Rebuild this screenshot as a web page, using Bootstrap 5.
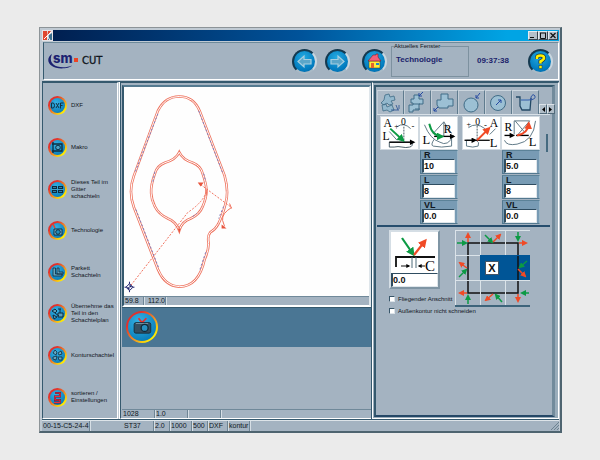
<!DOCTYPE html>
<html lang="de">
<head>
<meta charset="utf-8">
<meta name="viewport" content="width=device-width, initial-scale=1">
<title>CUT – Technologie</title>
<link href="https://cdn.jsdelivr.net/npm/bootstrap@5.3.0/dist/css/bootstrap.min.css" rel="stylesheet">
<style>
:root{--face:#a4b3c1;--edge:#35596e;--mid:#7897a9;--steel:#4a7694;--navy:#1b1f6b}
body{background:#ebebeb;font-family:"Liberation Sans",Arial,sans-serif;font-size:6px;line-height:7px;color:#10151c;min-height:100vh;padding:27px 38px 27px 39px}
button{font:inherit;color:inherit;border:0;padding:0;background:none}
svg{display:block;flex:none}
.app-window{background:#c0cad3;border:1px solid #8d9498;border-right:2px solid #4e6470;border-bottom:2px solid #4e6470;padding:2px 1px 0 2px}
.title-strip{height:11px;background:linear-gradient(90deg,#001d4d,#00539a 50%,#00a4e4 90%);padding-right:1px}
.win-btn{width:10px;height:9px;background:#b4bfc9;border:1px solid #e6ebef;border-right-color:#39434e;border-bottom-color:#39434e}
.win-btn svg,.spin svg{margin:auto}
.panel{background:var(--face);border:1px solid var(--edge);border-right-color:#fff;border-bottom-color:#fff}
.head-panel{height:38px;margin:1px 0 1px 1px;padding:0 5px 0 4px;border-top-color:#6d8a9a}
.brand{font:500 10px/12px "DejaVu Sans",sans-serif;-webkit-text-stroke:.3px #10151c}
.round-btn{width:25px;height:25px;border-radius:50%;border:2px solid #14394f;border-right-color:#c9d6df;border-bottom-color:#a9bac6;background:radial-gradient(circle at 45% 30%,#23a9e0,#0079bd 70%,#00548f)}
.window-box{width:78px;height:31px;border:1px solid #7d919f;position:relative}
.window-box legend{float:none;width:auto;position:absolute;left:2px;top:-4px;font-size:6px;line-height:7px;margin:0;background:var(--face)}
.heading{font-weight:700;font-size:8px;line-height:10px;color:var(--navy)}
.clock{margin-right:19px}
.body-grid{display:grid;grid-template-columns:minmax(0,76fr) minmax(0,253fr) minmax(0,188fr);border-top:1px solid var(--edge)}
.side-nav{padding-top:2px}
.side-btn{flex:1 1 0;min-height:0;gap:4px;padding-left:5px;white-space:nowrap;overflow:hidden}
.ring{width:19px;height:19px;border-radius:50%;flex:none;background:linear-gradient(135deg,#e2302c 25%,#f08a24 55%,#fff200 85%);padding:2px}
.ring-face{width:100%;height:100%;border-radius:50%;background:radial-gradient(circle at 40% 30%,#35b1e4,#0b7fba 75%)}
.ring-lg{width:32px;height:32px}
.center-col{border:1px solid var(--edge);border-right:0;border-bottom-color:#fff;margin-left:2px;padding-left:1px;background:var(--face);box-shadow:-1px 0 #fff}
.view-frame{border:2px solid var(--edge);border-top-color:#557b91;border-right-color:#dfe6eb;border-bottom-color:#fff;background:#fefefe;margin:2px 0 0 0}
.strip{height:9px;background:#a4b3c1;border-top:1px solid #70899a;font-size:7px;line-height:8px}
.strip-cell{border-right:1px solid #6e8595;box-shadow:1px 0 #d6dee5;padding-left:1px;white-space:nowrap;height:8px;flex:none;color:#10171e}
.c16{width:16px}.c20{width:20px}.c22{width:22px}.c31{width:31px}.c33{width:33px}
.steel-band{background:var(--steel);height:40px;padding:3px 4px;border-top:1px solid var(--edge)}
.right-col{border:1px solid #fff;border-top-color:var(--edge);background:#9aadbb;padding:2px 3px 1px 1px;margin-left:1px;border-left:1px solid #fff;box-shadow:-1px 0 var(--edge)}
.right-inner{background:var(--face);border:2px solid var(--edge);border-right:3px solid #728b9c;border-bottom:2px solid #254867;padding:3px 2px 0 1px}
.tab-btn{flex:0 1 27px;height:24px;border-top:1px solid #ccd6de;border-left:1px solid #c3ced7;border-right:1px solid #5f7b8e}
.tab-btn.active{background:#acbac7}
.spin{width:8px;height:10px;flex:none;background:#b0bdc8;border:1px solid #dce3e9;border-right-color:#526b7b;border-bottom-color:#526b7b}
.pane{border-top:1px solid #d8e0e7;border-bottom:2px solid #264d6d;padding:1px 2px 0 3px}
.pane-scroll{border-right:2px solid #456a80;height:18px;align-self:flex-start;margin-top:18px}
.pair{width:78px}
.pic{background:#fff;border:1px solid #d1dae1;width:39px;height:34px}
.params{width:38px}
.param{background:#789bb4;height:24px;border:1px solid #53788f;border-top-color:#5b8298;border-right-color:#9bb5c6;padding:0 0 0 1px;margin-bottom:1px}
.param label{display:block;font-weight:700;font-size:9px;line-height:8px;height:8px;padding-left:2px;color:#12181d}
.num-in{display:block;width:33px;height:14px;border:1px solid #2f4d61;border-right-color:#dfe6eb;border-bottom-color:#dfe6eb;border-left-width:2px;border-radius:0;background:#fff;padding:0;font-weight:700;font-size:9px;line-height:11px;color:#111}
.lower{padding:3px 0 0 12px}
.opts{width:66px;white-space:nowrap}
.gap-box{width:51px;border:2px solid #d5dee5;border-right-color:#7f95a4;border-bottom-color:#7f95a4;background:#fff;margin-bottom:4px}
.gap-box .num-in{width:100%}
.tick-row{gap:3px;height:12px}
.tick{appearance:none;width:6px;height:6px;background:#fff;border:1px solid #38566a;border-right-color:#dce3e9;border-bottom-color:#dce3e9;margin:0;flex:none}
.tick:checked{background:#00539a}
.dir-grid{display:grid;grid-template-columns:repeat(3,25px);border-bottom:2px solid #3d647b;align-self:flex-start}
.dir-btn{height:25px;border-top:1px solid #dbe3e9;border-left:1px solid #dbe3e9}
.dir-btn.on{background:#005596;border-color:#005596}
.x-face{width:14px;height:14px;background:#fff;border:1px solid #456;font-size:11px;line-height:12px;font-weight:700;color:#111;margin-left:4px}
.foot{height:12px;font-size:7px;line-height:10px;background:var(--face);border-top:1px solid var(--edge);box-shadow:inset 0 1px #dde4e9;padding-top:1px}
.foot .strip-cell{height:10px}
.lead-cell{flex:0 0 81px}
</style>
<script src="https://cdn.jsdelivr.net/npm/bootstrap@5.3.0/dist/js/bootstrap.bundle.min.js"></script>
</head>
<body class="d-flex flex-column">
<svg width="0" height="0" class="position-absolute" aria-hidden="true">
<defs>
<marker id="ar" viewBox="0 0 6 6" refX="4" refY="3" markerWidth="4" markerHeight="4" orient="auto"><path d="M0 0L6 3L0 6z" fill="#f04a26"/></marker>
<marker id="ag" viewBox="0 0 6 6" refX="4" refY="3" markerWidth="4" markerHeight="4" orient="auto"><path d="M0 0L6 3L0 6z" fill="#0c9a44"/></marker>
<marker id="ak" viewBox="0 0 6 6" refX="4" refY="3" markerWidth="5" markerHeight="4" orient="auto"><path d="M0 0L6 3L0 6z" fill="#000"/></marker>
</defs></svg>
<main class="app-window d-flex flex-column flex-grow-1">
 <div class="title-strip d-flex align-items-center flex-shrink-0">
  <svg width="11" height="11" viewBox="0 0 11 11"><path fill="#e8e4e6" d="M0 0h11v11H0z"/><path fill="#e04830" d="M1 1h4v9H1zM6 1h3L5 7z"/><path fill="#3a6f8e" d="M7 5l3-2v7H6z"/><path stroke="#fff" d="M2 9L9 2M5 6l3 4" fill="none"/></svg>
  <button class="win-btn d-flex ms-auto" aria-label="Minimieren"><svg width="8" height="7"><path d="M1 5.500h4" stroke="#111"/></svg></button>
  <button class="win-btn d-flex" aria-label="Maximieren"><svg width="8" height="7"><path d="M1 1h6M1.500 1v5.500h5V1" stroke="#111" fill="none"/></svg></button>
  <button class="win-btn d-flex" aria-label="Schließen"><svg width="8" height="7"><path d="M1.500 1l5 5M6.500 1l-5 5" stroke="#111" stroke-width="1.200"/></svg></button>
 </div>
 <header class="panel head-panel d-flex align-items-center flex-shrink-0">
  <svg width="34" height="20" viewBox="0 0 34 20" role="img" aria-label="sm"><path d="M4 3C-1 6 -1 12 4 15C8 18.500 21 18 24 14.500C19 17 9 17 5.500 13.500C2.500 11 2 7 4 3z" fill="#1c2272"/><text x="5" y="12" font-family="Inter,sans-serif" font-weight="800" font-size="13" fill="#1c2272">sm</text><rect x="26" y="7" width="4" height="4" fill="#ee4323"/></svg>
  <span class="brand">CUT</span>
  <div class="d-flex ms-auto align-items-center">
   <div class="d-flex gap-2 me-2 pe-1">
   <button class="round-btn" aria-label="Zurück"><svg width="21" height="21" viewBox="0 0 21 21"><path d="M4 10.500L10 5v3.500h7v4.500h-7V16z" fill="#5aa6c9" stroke="#a7cfe0" stroke-width="1.200"/></svg></button>
   <button class="round-btn" aria-label="Vor"><svg width="21" height="21" viewBox="0 0 21 21"><path d="M17 10.500L11 5v3.500H4v4.500h7V16z" fill="#5aa6c9" stroke="#a7cfe0" stroke-width="1.200"/></svg></button>
   </div>
   <button class="round-btn me-1" aria-label="Start"><svg width="21" height="21" viewBox="0 0 21 21"><path d="M5 10h11v7H5z" fill="#ffee3b" stroke="#333" stroke-width=".5"/><path d="M9 4L4 10h13l-3-4V3h-2v1z" fill="#f0607a" stroke="#711" stroke-width=".5"/><path d="M7 12h3v5H7z" fill="#e7662b"/><path d="M12 12h3v2h-3z" fill="#2386c8"/></svg></button>
   <fieldset class="window-box me-2"><legend>Aktuelles Fenster</legend><div class="heading ps-1 pt-2">Technologie</div></fieldset>
   <time class="heading clock">09:37:38</time>
   <button class="round-btn" aria-label="Hilfe"><svg width="21" height="21" viewBox="0 0 21 21"><path d="M7 8V6.500Q7 4.500 10.500 4.500Q14 4.500 14 7Q14 8.500 10.500 10.500V12.500" fill="none" stroke="#18364b" stroke-width="4"/><path d="M7 8V6.500Q7 4.500 10.500 4.500Q14 4.500 14 7Q14 8.500 10.500 10.500V12.500" fill="none" stroke="#fff100" stroke-width="2.600"/><rect x="9" y="14.500" width="3" height="3" fill="#fff100" stroke="#18364b" stroke-width=".5"/></svg></button>
  </div>
 </header>
 <div class="body-grid flex-grow-1">
  <nav class="panel side-nav d-flex flex-column">
   <button class="side-btn d-flex align-items-center text-start"><span class="ring"><span class="ring-face d-block"><svg width="15" height="15" viewBox="0 0 15 15"><path d="M1.500 5h1.500q1.500 0 1.500 2.500T3 10H1.500zM6 5l3 5M9 5l-3 5M10.500 10.500V5h3M10.500 7.500h2" fill="none" stroke="#123246"/></svg></span></span><span>DXF</span></button>
   <button class="side-btn d-flex align-items-center text-start"><span class="ring"><span class="ring-face d-block"><svg width="15" height="15" viewBox="0 0 15 15"><path d="M3 2v11M2 4h10v7H2" fill="none" stroke="#0d2c40" stroke-width="1.300"/><circle cx="8" cy="7.500" r="2.300" fill="#4da3c5" stroke="#0d2c40"/></svg></span></span><span>Makro</span></button>
   <button class="side-btn d-flex align-items-center text-start"><span class="ring"><span class="ring-face d-block"><svg width="15" height="15" viewBox="0 0 15 15"><path d="M2 4h5v3H2zM8 4h5v3H8zM2 8h5v3H2zM8 8h5v3H8z" fill="#0d2c40"/><path d="M1 7.500h13M3 5.500h3M9 5.500h3M3 9.500h3M9 9.500h3" stroke="#4da3c5" stroke-width=".7"/></svg></span></span><span>Dieses Teil im<br>Gitter<br>schachteln</span></button>
   <button class="side-btn d-flex align-items-center text-start"><span class="ring"><span class="ring-face d-block"><svg width="15" height="15" viewBox="0 0 15 15"><path d="M4 6h8v6H4z" fill="#7bb6cf" stroke="#0d2c40"/><circle cx="8" cy="9" r="2.300" fill="#238fbd" stroke="#0d2c40"/><path d="M3 1l2 4" stroke="#e9422d" stroke-width="1.500"/></svg></span></span><span>Technologie</span></button>
   <button class="side-btn d-flex align-items-center text-start"><span class="ring"><span class="ring-face d-block"><svg width="15" height="15" viewBox="0 0 15 15"><path d="M3 3h2.500v6H12v2H3zM7 3h2v4h4v2H7z" fill="#63a5bf" stroke="#0d2c40" stroke-width=".8"/></svg></span></span><span>Parkett<br>Schachteln</span></button>
   <button class="side-btn d-flex align-items-center text-start"><span class="ring"><span class="ring-face d-block"><svg width="15" height="15" viewBox="0 0 15 15"><path d="M2 5l3-2 2 2-2 2zM3 9l4 2-3 2zM8 7h5v4H8zM8 3h3M10 3v4M5 7l4 3" fill="#5b9fb9" stroke="#0d2c40"/></svg></span></span><span>Übernehme das<br>Teil in den<br>Schachtelplan</span></button>
   <button class="side-btn d-flex align-items-center text-start"><span class="ring"><span class="ring-face d-block"><svg width="15" height="15" viewBox="0 0 15 15"><path d="M3 5l2-3 2 2-1 3zM8 5l3-2 1 3-3 1zM3 9l4-1-1 4-3-1zM8 9h4v3H9z" fill="#68a9c1" stroke="#0d2c40" stroke-width=".8"/></svg></span></span><span>Konturschachtel</span></button>
   <button class="side-btn d-flex align-items-center text-start"><span class="ring"><span class="ring-face d-block"><svg width="15" height="15" viewBox="0 0 15 15"><path d="M5 3h5v3.500H5V10h5v2.500H4" fill="none" stroke="#4c1d3e" stroke-width="2"/><path d="M5 3h5v3.500H5V10h5v2.500H4" fill="none" stroke="#f02d3c" stroke-width="1.200"/></svg></span></span><span>sortieren /<br>Einstellungen</span></button>
  </nav>
  <section class="center-col d-flex flex-column">
   <div class="view-frame d-flex flex-column">
    <svg width="100%" height="209" viewBox="123 87 246 209" preserveAspectRatio="xMinYMin meet" role="img" aria-label="Kontur">
     <g fill="none" stroke="#ee7460" stroke-width="2.600"><path d="M157 111Q164 96.500 178.500 96.500Q193 96.500 199 111L224 176Q228.500 192 225 204Q222 216 218 224Q215 230 209.500 233Q206.500 237 208 244Q208 251 204 260Q198 287.500 178.500 287.500Q164 287 157 270L133 208Q127 192 133 176Z"/><path d="M178.500 152.500Q175 160 164 163Q156 166 154 174C148 190 150 199 154 207Q158 215 167 219Q175 222 178.500 231Q181 222 190 219Q199 215 202 207C208 193 206 186 202 174Q200 166 192 163Q182 160 178.500 152.500Z"/></g>
     <g fill="none" stroke="#fff" stroke-width="1"><path d="M157 111Q164 96.500 178.500 96.500Q193 96.500 199 111L224 176Q228.500 192 225 204Q222 216 218 224Q215 230 209.500 233Q206.500 237 208 244Q208 251 204 260Q198 287.500 178.500 287.500Q164 287 157 270L133 208Q127 192 133 176Z"/><path d="M178.500 152.500Q175 160 164 163Q156 166 154 174C148 190 150 199 154 207Q158 215 167 219Q175 222 178.500 231Q181 222 190 219Q199 215 202 207C208 193 206 186 202 174Q200 166 192 163Q182 160 178.500 152.500Z"/></g>
     <g fill="none" stroke="#7d7dbd" stroke-dasharray="2 2"><path d="M157 114L134 173M198 111L222 173M135 210L158 269M205 253L199 271M223 207L218 219M152 182L154 172M203 174L205 182M192 217L196 214"/></g>
     <g fill="none" stroke="#f0705c"><path d="M130 286L187 213Q202 203 206 192M200 185L231 208" stroke-dasharray="2 1.500"/><path d="M231 208Q221 214 222 221L224 227M229 204L231 209M206 190v6"/></g>
     <path d="M197 183l6 0-3 4zM221 225l5 4-5 0zM177 229h3l-1.500 4z" fill="#e8543c"/>
     <g><path d="M123.500 288h10M128.500 282.500v10.500" stroke="#20246e"/><path d="M128.500 284.500l3.500 3.500-3.500 3.500-3.500-3.500z" fill="#fff" stroke="#20246e"/><path d="M128.500 285v3h3zM125.500 288h3v3z" fill="#20246e"/></g>
    </svg>
    <div class="strip d-flex"><span class="strip-cell c20">59.8</span><span class="strip-cell c22 ps-1">112.0</span></div>
   </div>
   <div class="steel-band"><button class="ring ring-lg" aria-label="Kamera"><span class="ring-face d-block"><svg width="28" height="28" viewBox="0 0 32 32"><path d="M12 6l4 5 5-5" fill="none" stroke="#e6302e" stroke-width="2"/><rect x="7" y="11" width="19" height="12" rx="2" fill="#344f61" stroke="#142a38"/><path d="M9 12h14" stroke="#7b98a8"/><circle cx="19" cy="17" r="4" fill="#298fc0" stroke="#102836" stroke-width="1.500"/></svg></span></button></div>
   <div class="strip d-flex mt-auto"><span class="strip-cell c33">1028</span><span class="strip-cell c33">1.0</span><span class="strip-cell c33"></span><span class="strip-cell c33 border-0 shadow-none"></span></div>
  </section>
  <section class="right-col d-flex flex-column">
   <div class="right-inner flex-grow-1">
    <div class="d-flex align-items-end" role="tablist">
     <button class="tab-btn active" role="tab" aria-label="Kontur"><svg width="25" height="22" viewBox="0 0 25 22" fill="#93b8cd" stroke="#406c87" stroke-width=".8"><path d="M7 3l4-1 1 3 4-1 1 4-4 1 2 3-4 1-2-2-3 2-3-2 3-3zM4 13l4-1 1 3 5-2 2 5-4 2-3-2-4 1z"/><path d="M13 18h8M18 13l2 5M21 13v4" stroke="#244b8d" fill="none"/></svg></button>
     <button class="tab-btn" role="tab" aria-label="Anfahren"><svg width="25" height="22" viewBox="0 0 25 22"><path d="M6 7h3V3h5v4h4v5h-4v6H8v2H4v-7h4v-2H6z" fill="#9cc0d4" stroke="#406c87"/><path d="M8 12h7M10 17h5" stroke="#406c87"/><path d="M18 0l-4 4M14 4h3M14 4V1" stroke="#2448a0" fill="none"/></svg></button>
     <button class="tab-btn" role="tab" aria-label="Außenecke"><svg width="25" height="22" viewBox="0 0 25 22"><path d="M9 2h7v5h5v7h-5v2H7l-2-3V8h4z" fill="#9cc0d4" stroke="#406c87"/><path d="M6 15l-4 4M2 19v-3M2 19h3" stroke="#2448a0"/></svg></button>
     <button class="tab-btn" role="tab" aria-label="Kreis außen"><svg width="25" height="22" viewBox="0 0 25 22"><circle cx="12" cy="13" r="7" fill="#9cc0d4" stroke="#406c87"/><path d="M21 1l-4 5M17 6h3M17 6V3" stroke="#2448a0" fill="none"/></svg></button>
     <button class="tab-btn" role="tab" aria-label="Kreis innen"><svg width="25" height="22" viewBox="0 0 25 22"><circle cx="12" cy="11" r="7.500" fill="#9cc0d4" stroke="#406c87"/><path d="M10 13l5-5M15 8h-3M15 8v3" stroke="#2448a0" fill="none"/></svg></button>
     <button class="tab-btn" role="tab" aria-label="Schlaufe"><svg width="25" height="22" viewBox="0 0 25 22"><path d="M7 7h10v11H9q-2-2-2-4z" fill="#9cc0d4"/><path d="M3 5h4v9l2 4h8l1-12" fill="none" stroke="#234966" stroke-width="1.300"/><path d="M18 8V5q2-4 4-1 1 4-7 4H8" fill="none" stroke="#3156a3"/></svg></button>
     <button class="spin d-flex" aria-label="Zurück blättern"><svg width="4" height="5"><path d="M4 0v5L1 2.500z"/></svg></button><button class="spin d-flex" aria-label="Weiter blättern"><svg width="4" height="5"><path d="M0 0v5l3-2.500z"/></svg></button>
    </div>
    <div class="pane d-flex">
     <div class="pair me-1">
      <div class="d-flex">
       <svg class="pic" viewBox="0 0 37 33" font-family="Liberation Serif,serif"><path d="M8 31V26h23Q33 30 29 31t-8 0-8 0z" fill="none" stroke="#445963"/><path d="M16 10Q23 5 30 12M8 15l8 9" stroke="#5e7885" fill="none"/><path d="M23 10v16" stroke="#445963" stroke-dasharray="2 1"/><path d="M8 26h25" stroke="#000" stroke-width="1.400" marker-end="url(#ak)"/><path d="M9 12L22 24" stroke="#0c9a44" stroke-width="2" marker-end="url(#ag)"/><text x="2" y="10" font-size="12">A</text><text x="1" y="24" font-size="12">L</text><text x="20" y="8" font-size="10">0</text><text x="13" y="12" font-size="8">+</text><text x="31" y="12" font-size="9">-</text></svg>
       <svg class="pic" viewBox="0 0 37 33" font-family="Liberation Serif,serif"><path d="M13 17L24 5v15M24 5l8 12M4 8Q10 23 20 26Q28 31 34 19M14 23Q10 29 13 30Q21 32 32 30V20" fill="none" stroke="#5e7885"/><path d="M14 20h20" stroke="#000" stroke-width="1.400" marker-end="url(#ak)"/><path d="M9 7Q12 20 22 20" stroke="#0c9a44" stroke-width="2" fill="none" marker-end="url(#ag)"/><text x="24" y="16" font-size="12">R</text><text x="2" y="28" font-size="13">L</text></svg>
      </div>
      <div class="params ms-auto"><div class="param"><label for="r1">R</label><input class="num-in" id="r1" value="10"></div><div class="param"><label for="l1">L</label><input class="num-in" id="l1" value="8"></div><div class="param"><label for="v1">VL</label><input class="num-in" id="v1" value="0.0"></div></div>
     </div>
     <div class="pair">
      <div class="d-flex">
       <svg class="pic" viewBox="0 0 37 33" font-family="Liberation Serif,serif"><path d="M3 24h10q4 2 2 6-5 2-12 0zM5 11Q13 5 22 12M27 18l6-6" stroke="#5e7885" fill="none"/><path d="M14 9v15" stroke="#445963" stroke-dasharray="2 1"/><path d="M1 24h11" stroke="#000" stroke-width="1.400" marker-end="url(#ak)"/><path d="M13 24h14" stroke="#000" stroke-width="1.300"/><path d="M14 24L26 12" stroke="#f04a26" stroke-width="2" marker-end="url(#ar)"/><text x="27" y="10" font-size="12">A</text><text x="27" y="31" font-size="13">L</text><text x="12" y="8" font-size="10">0</text><text x="3" y="10" font-size="8">+</text><text x="21" y="11" font-size="9">-</text></svg>
       <svg class="pic" viewBox="0 0 37 33" font-family="Liberation Serif,serif"><path d="M12 18V4h16L16 18M13 4l10 12M2 24Q4 30 15 28Q32 25 34 4" fill="none" stroke="#5e7885"/><path d="M2 19h9" stroke="#000" stroke-width="1.400" marker-end="url(#ak)"/><path d="M14 19h13" stroke="#000" stroke-width="1.400"/><path d="M15 19Q26 17 27 7" stroke="#f04a26" stroke-width="2" fill="none" marker-end="url(#ar)"/><text x="2" y="14" font-size="12">R</text><text x="27" y="30" font-size="13">L</text></svg>
      </div>
      <div class="params ms-auto"><div class="param"><label for="r2">R</label><input class="num-in" id="r2" value="5.0"></div><div class="param"><label for="l2">L</label><input class="num-in" id="l2" value="8"></div><div class="param"><label for="v2">VL</label><input class="num-in" id="v2" value="0.0"></div></div>
     </div>
     <div class="pane-scroll ms-auto"></div>
    </div>
    <div class="lower d-flex align-items-start">
     <div class="opts flex-shrink-0">
      <div class="gap-box"><svg width="47" height="41" viewBox="0 0 47 41"><path d="M5 35V25h39" stroke="#111" stroke-width="1.800" fill="none"/><path d="M21 25v11M25 25v11" stroke="#4f6c7b"/><path d="M10 34h8" stroke="#111" marker-end="url(#ak)"/><path d="M34 34h-6" stroke="#111" marker-end="url(#ak)"/><path d="M11 6L22 22" stroke="#0c9a44" stroke-width="2.200" marker-end="url(#ag)"/><path d="M23 23L34 9" stroke="#f04a26" stroke-width="2.200" marker-end="url(#ar)"/><text x="34" y="39" font-family="Liberation Serif,serif" font-size="15">C</text></svg><input class="num-in" aria-label="C" value="0.0"></div>
      <div class="tick-row d-flex align-items-center"><input type="checkbox" class="tick" id="fly"><label for="fly">Fliegender Anschnitt</label></div>
      <div class="tick-row d-flex align-items-center"><input type="checkbox" class="tick" id="outer"><label for="outer">Außenkontur nicht schneiden</label></div>
     </div>
     <div class="dir-grid">
      <button class="dir-btn" aria-label="Oben links"><svg width="24" height="24"><path d="M12 24V12h12" stroke="#111" stroke-width="1.500" fill="none"/><path d="M12 11V3" stroke="#f04a26" stroke-width="1.500" marker-end="url(#ar)"/><path d="M1 12h9" stroke="#0c9a44" stroke-width="1.500" marker-end="url(#ag)"/></svg></button>
      <button class="dir-btn" aria-label="Oben"><svg width="24" height="24"><path d="M0 12h24" stroke="#111" stroke-width="1.500"/><path d="M4 4l7 7" stroke="#0c9a44" stroke-width="1.500" marker-end="url(#ag)"/><path d="M12 11l7-7" stroke="#f04a26" stroke-width="1.500" marker-end="url(#ar)"/></svg></button>
      <button class="dir-btn" aria-label="Oben rechts"><svg width="24" height="24"><path d="M0 12h12v12" stroke="#111" stroke-width="1.500" fill="none"/><path d="M12 1v8" stroke="#0c9a44" stroke-width="1.500" marker-end="url(#ag)"/><path d="M13 12h7" stroke="#f04a26" stroke-width="1.500" marker-end="url(#ar)"/></svg></button>
      <button class="dir-btn" aria-label="Links"><svg width="24" height="24"><path d="M12 0v24" stroke="#111" stroke-width="1.500"/><path d="M11 12L4 7" stroke="#f04a26" stroke-width="1.500" marker-end="url(#ar)"/><path d="M3 21l7-7" stroke="#0c9a44" stroke-width="1.500" marker-end="url(#ag)"/></svg></button>
      <button class="dir-btn on" aria-pressed="true"><span class="x-face d-block">X</span></button>
      <button class="dir-btn on" aria-label="Rechts"><svg width="24" height="24"><path d="M12 0v24" stroke="#111" stroke-width="1.500"/><path d="M21 5l-7 6" stroke="#0c9a44" stroke-width="1.500" marker-end="url(#ag)"/><path d="M12 13l7 7" stroke="#f04a26" stroke-width="1.500" marker-end="url(#ar)"/></svg></button>
      <button class="dir-btn" aria-label="Unten links"><svg width="24" height="24"><path d="M12 0v12h12" stroke="#111" stroke-width="1.500" fill="none"/><path d="M11 12H4" stroke="#f04a26" stroke-width="1.500" marker-end="url(#ar)"/><path d="M12 23v-8" stroke="#0c9a44" stroke-width="1.500" marker-end="url(#ag)"/></svg></button>
      <button class="dir-btn" aria-label="Unten"><svg width="24" height="24"><path d="M0 12h24" stroke="#111" stroke-width="1.500"/><path d="M21 21l-6-7" stroke="#0c9a44" stroke-width="1.500" marker-end="url(#ag)"/><path d="M12 13l-7 6" stroke="#f04a26" stroke-width="1.500" marker-end="url(#ar)"/></svg></button>
      <button class="dir-btn" aria-label="Unten rechts"><svg width="24" height="24"><path d="M0 12h12V0" stroke="#111" stroke-width="1.500" fill="none"/><path d="M23 12h-7" stroke="#0c9a44" stroke-width="1.500" marker-end="url(#ag)"/><path d="M12 13v7" stroke="#f04a26" stroke-width="1.500" marker-end="url(#ar)"/></svg></button>
     </div>
    </div>
   </div>
  </section>
 </div>
 <footer class="foot d-flex flex-shrink-0">
  <span class="lead-cell d-flex"><span class="strip-cell">00-15-C5-24-4</span></span>
  <span class="strip-cell c31">ST37</span><span class="strip-cell c16">2.0</span><span class="strip-cell c22">1000</span><span class="strip-cell c16">500</span><span class="strip-cell c20">DXF</span><span class="strip-cell c22">kontur</span>
  <svg class="ms-auto" width="9" height="9"><path d="M1 9l8-8M4 9l5-5M7 9l2-2" stroke="#6d8391"/></svg>
 </footer>
</main>
</body>
</html>
